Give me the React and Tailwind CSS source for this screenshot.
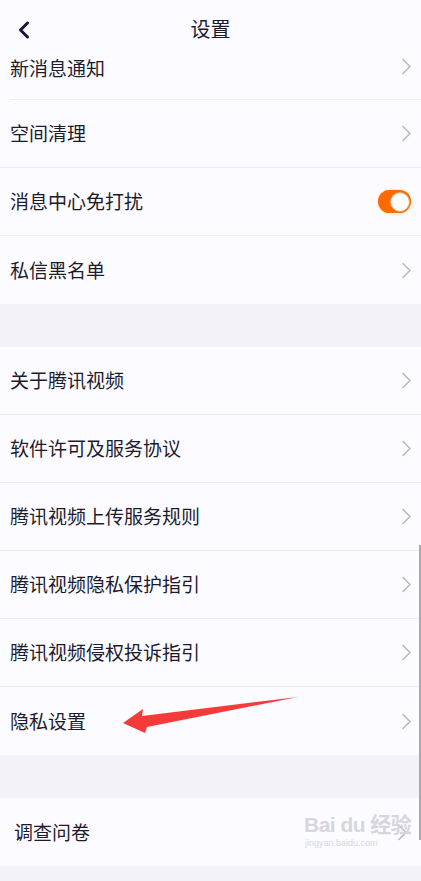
import { ChevronLeft } from 'lucide-react'

const GROUP_2 = ['关于腾讯视频', '软件许可及服务协议', '腾讯视频上传服务规则', '腾讯视频隐私保护指引', '腾讯视频侵权投诉指引', '隐私设置']

function Chevron() {
  return (
    <svg width="11" height="17" viewBox="0 0 11 17" fill="none" className="shrink-0">
      <path d="M2 1.5 L9 8.5 L2 15.5" stroke="#b9b9be" strokeWidth="1.6" strokeLinecap="round" strokeLinejoin="round" />
    </svg>
  )
}

function Toggle() {
  return (
    <div className="w-[33px] h-[23px] rounded-full bg-[#ff6a00] flex items-center justify-end pr-[1px] shadow-[0_0_2px_rgba(255,170,0,0.6)]">
      <div className="w-[20px] h-[20px] rounded-full bg-white border border-[#e0a060]" />
    </div>
  )
}

function Row({ label, right, last, className = '' }) {
  return (
    <div className={`h-[68px] flex items-center pl-[10px] pr-[9px] ${last ? '' : 'border-b border-[#ebebf0]'} ${className}`}>
      <span className="flex-1 text-[19px] text-[#1c1b2e]">{label}</span>
      {right || <Chevron />}
    </div>
  )
}

export default function App() {
  return (
    <div className="relative w-[421px] h-[881px] overflow-hidden bg-[#f3f3f7]" style={{ fontFamily: '"Noto Sans CJK SC", "Noto Sans", sans-serif' }}>
      {/* header */}
      <div className="h-[57px] bg-[#fcfbff] flex items-center relative">
        <div className="pl-[10px] pt-[2px]">
          <ChevronLeft size={28} strokeWidth={2.6} color="#1a1934" />
        </div>
        <div className="absolute left-0 right-0 text-center text-[20px] text-[#1c1b2e] pointer-events-none">设置</div>
      </div>

      {/* group 1 */}
      <div className="bg-[#fcfbff]">
        <div className="h-[43px] ml-[10px] pr-[9px] border-b border-[#ebebf0] flex items-start pt-[1px]">
          <span className="flex-1 text-[19px] leading-[19px] text-[#1c1b2e]">新消息通知</span>
          <Chevron />
        </div>
        <Row label="空间清理" />
        <Row label="消息中心免打扰" right={<div className="mr-[1px]"><Toggle /></div>} />
        <Row label="私信黑名单" last />
      </div>

      <div className="h-[43px]" />

      {/* group 2 */}
      <div className="bg-[#fcfbff]">
        {GROUP_2.map((label, i) => (
          <Row key={label} label={label} last={i === GROUP_2.length - 1} />
        ))}
      </div>

      <div className="h-[43px]" />

      {/* group 3 */}
      <div className="bg-[#fcfbff] h-[68px] flex items-center pl-[14px] pr-[13px]">
        <span className="flex-1 text-[19px] text-[#1c1b2e]">调查问卷</span>
        <Chevron />
      </div>

      {/* scroll indicator */}
      <div className="absolute left-[419px] top-[545px] w-[2px] h-[295px] bg-[#a8a8ad]" />

      {/* red arrow annotation */}
      <svg className="absolute left-0 top-0" width="421" height="881" viewBox="0 0 421 881">
        <polygon points="123,723 143,709 142,716 298,697 147,727 145,733" fill="#f53a3a" />
      </svg>

      {/* watermark */}
      <div className="absolute left-[304px] top-[814px] text-[#d6d6dc] leading-none select-none whitespace-nowrap">
        <div className="text-[21px] font-bold tracking-tight" style={{ fontFamily: '"Liberation Sans", "Noto Sans CJK SC", sans-serif' }}>Bai du 经验</div>
        <div className="text-[9px] mt-[4px] pl-[1px]" style={{ fontFamily: '"Liberation Sans", sans-serif' }}>jingyan.baidu.com</div>
      </div>
    </div>
  )
}
